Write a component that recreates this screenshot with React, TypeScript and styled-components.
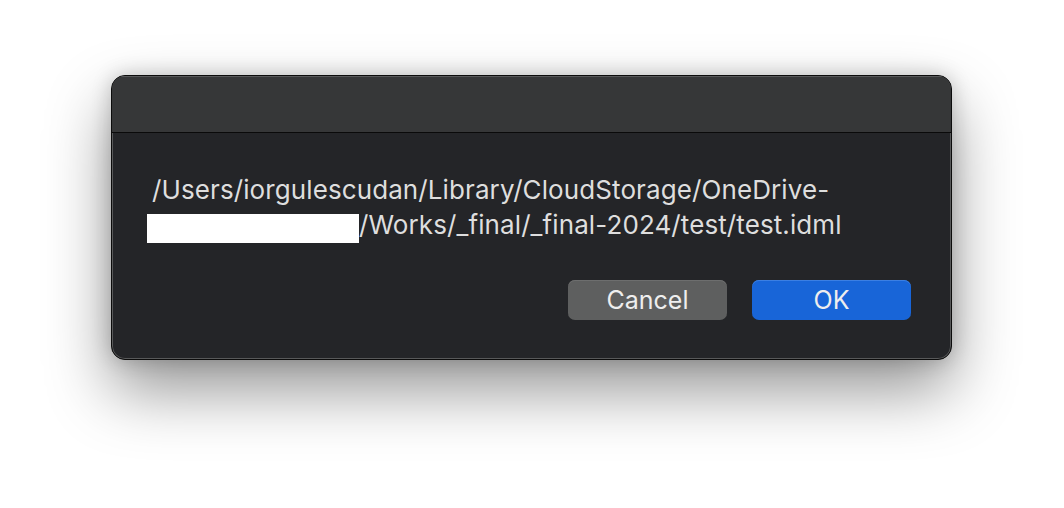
import React from "react";
import styled, { createGlobalStyle } from "styled-components";

const GlobalStyle = createGlobalStyle`
  html, body {
    margin: 0;
    padding: 0;
    background: #ffffff;
  }
  body {
    font-family: Inter, "Noto Sans", "Liberation Sans", sans-serif;
  }
`;

const Stage = styled.div`
  width: 1064px;
  height: 508px;
  padding: 75px 0 0 111px;
  box-sizing: border-box;
`;

const Dialog = styled.div`
  width: 841px;
  height: 285px;
  box-sizing: border-box;
  display: flex;
  flex-direction: column;
  border-radius: 14px;
  overflow: hidden;
  background: #242528;
  border: 1px solid #0c0c0c;
  box-shadow: inset 0 0 0 1px #58595a, 0 30px 64px rgba(0, 0, 0, 0.42),
    0 0 20px rgba(0, 0, 0, 0.2);
`;

const TitleBar = styled.div`
  height: 56px;
  flex: none;
  background: #363738;
  border-bottom: 1px solid #0a0a0a;
  box-shadow: inset 0 1px 0 #58595a;
`;

const Body = styled.div`
  flex: 1;
  display: flex;
  flex-direction: column;
  padding: 39px 40px 39px 35px;
`;

const Message = styled.div`
  color: #dedede;
  font-size: 26px;
  line-height: 35px;
  letter-spacing: 0.1px;
  text-indent: 5px;
`;

const Redacted = styled.span`
  display: inline-block;
  width: 212px;
  height: 29px;
  background: #ffffff;
  vertical-align: -9px;
`;

const Actions = styled.div`
  margin-top: auto;
  display: flex;
  justify-content: flex-end;
  gap: 25px;
`;

const Button = styled.button<{ $primary?: boolean }>`
  width: 159px;
  height: 40px;
  padding: 0;
  border: none;
  border-radius: 7px;
  font-family: inherit;
  font-size: 25px;
  color: #eeeeee;
  background: ${({ $primary }) => ($primary ? "#1865d8" : "#5e5f5f")};
  box-shadow: inset 0 1px 0
    ${({ $primary }) => ($primary ? "#3b7fe3" : "#6d6e6e")};
  cursor: default;
`;

const App = () => {
  return (
    <Stage>
      <GlobalStyle />
      <Dialog>
        <TitleBar />
        <Body>
          <Message>
            /Users/iorgulescudan/Library/CloudStorage/OneDrive-
            <br />
            <Redacted />
            /Works/_final/_final-2024/test/test.idml
          </Message>
          <Actions>
            <Button>Cancel</Button>
            <Button $primary>OK</Button>
          </Actions>
        </Body>
      </Dialog>
    </Stage>
  );
};

export default App;
